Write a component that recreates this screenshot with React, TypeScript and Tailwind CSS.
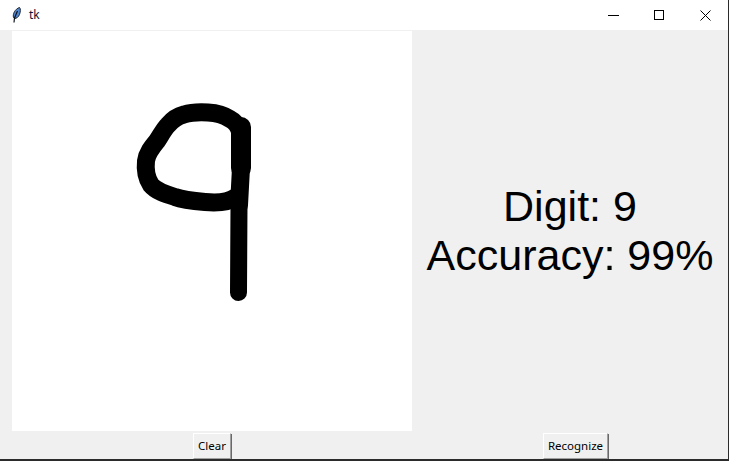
function Feather() {
  return (
    <svg width="9" height="16" viewBox="0 0 9 16" className="ml-[12px]">
      <path d="M1.5 10.5 C0.5 7 3 2 7.5 0.5 C8.8 1.5 8.5 5 7.5 7.5 C6.5 10 4.5 11.5 2.5 11.5 Z" fill="#4f86d0" stroke="#1c2433" strokeWidth="1" />
      <path d="M2 15.5 L2.5 11 L5.5 4" fill="none" stroke="#10141c" strokeWidth="1.2" />
    </svg>
  );
}

function TitleBar() {
  return (
    <div className="flex h-[30px] items-center bg-white">
      <Feather />
      <span className="ml-[8px] text-[12px] text-[#1a1030]">tk</span>
      <div className="ml-auto flex h-full items-center">
        <div className="flex w-[45px] justify-center">
          <svg width="11" height="11" viewBox="0 0 11 11">
            <path d="M0 5.5H11" stroke="#000" strokeWidth="1" />
          </svg>
        </div>
        <div className="flex w-[46px] justify-center">
          <svg width="10" height="10" viewBox="0 0 10 10">
            <rect x="0.5" y="0.5" width="9" height="9" fill="none" stroke="#000" />
          </svg>
        </div>
        <div className="flex w-[46px] justify-center">
          <svg width="11" height="11" viewBox="0 0 11 11">
            <path d="M0.5 0.5L10.5 10.5M10.5 0.5L0.5 10.5" stroke="#000" strokeWidth="1" />
          </svg>
        </div>
      </div>
    </div>
  );
}

function TkButton({ label, width }: { label: string; width: string }) {
  return (
    <button
      className={`flex h-[26px] ${width} items-center justify-center border border-t-white border-l-white border-r-[#a0a0a0] border-b-[#a0a0a0] bg-[#f0f0f0] text-[11.5px] leading-none text-black shadow-[1px_1px_0_#696969]`}
    >
      {label}
    </button>
  );
}

export default function App() {
  return (
    <div className="h-[461px] w-[729px] overflow-hidden border-r border-b-2 border-r-[#2b2b2b] border-b-[#2b2b2b] bg-[#f0f0f0] font-['Noto_Sans',sans-serif]">
      <TitleBar />
      <div className="mt-px flex">
        <div className="ml-3 h-[400px] w-[400px] bg-white">
          <svg width="400" height="400" viewBox="12 31 400 400">
            <g fill="none" stroke="#000" strokeLinecap="round" strokeLinejoin="round">
              <path
                strokeWidth="18"
                d="M236 197C228 203 216 203 205 202C193 201 183 200 175 197C165 194 156 191 151 185C147 179 145 170 146 161C147 153 152 147 157 141C161 135 164 129 168 125C173 119 178 116 184 114.5C192 112 200 112 208 112.5C216 113 224 115 230 119C236 122 239 127 240.5 133"
              />
              <path strokeWidth="20" d="M241 127L241 168" />
              <path strokeWidth="18" d="M241 168L239 205" />
              <path strokeWidth="17" d="M239 205L238.5 292.5" />
            </g>
          </svg>
        </div>
        <div className="flex flex-1 items-center justify-center">
          <div className="text-center font-['Liberation_Sans',sans-serif] text-[43px] leading-[49px] text-black">
            <div>Digit: 9</div>
            <div>Accuracy: 99%</div>
          </div>
        </div>
      </div>
      <div className="mt-[2px] flex">
        <div className="ml-3 flex w-[400px] justify-center">
          <TkButton label="Clear" width="w-[38px]" />
        </div>
        <div className="flex flex-1 justify-center pl-[11px]">
          <TkButton label="Recognize" width="w-[65px]" />
        </div>
      </div>
    </div>
  );
}
